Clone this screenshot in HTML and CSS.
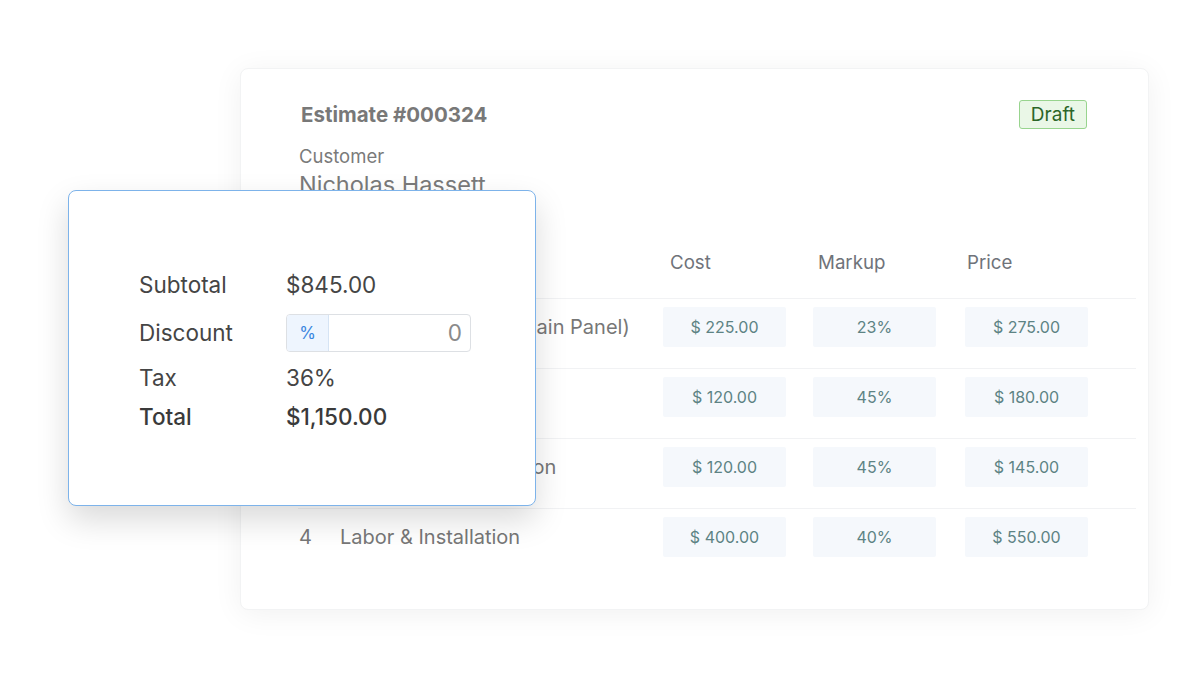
FILE: index.html
```html
<!DOCTYPE html>
<html lang="en">
<head>
    <meta charset="UTF-8">
    <title>Estimate #000324</title>
    <link rel="stylesheet" href="styles.css">
</head>
<body>
    <div class="stage">
        <div class="estimate">
            <div class="estimate-head">
                <h2>Estimate #000324</h2>
                <span class="badge">Draft</span>
            </div>
            <div class="customer">
                <span class="customer-label">Customer</span>
                <span class="customer-name">Nicholas Hassett</span>
            </div>

            <div class="items">
                <div class="row row-head">
                    <span>#</span>
                    <span>Item</span>
                    <span class="col-h">Cost</span>
                    <span class="col-h markup-h">Markup</span>
                    <span class="col-h price-h">Price</span>
                </div>
                <div class="row">
                    <span class="num">1</span>
                    <span class="name">Electrical Breaker (Main Panel)</span>
                    <span class="cell">$ 225.00</span>
                    <span class="cell">23%</span>
                    <span class="cell">$ 275.00</span>
                </div>
                <div class="row">
                    <span class="num">2</span>
                    <span class="name">Wiring &amp; Outlets</span>
                    <span class="cell">$ 120.00</span>
                    <span class="cell">45%</span>
                    <span class="cell">$ 180.00</span>
                </div>
                <div class="row">
                    <span class="num">3</span>
                    <span class="name">GFCI Outlet Installation</span>
                    <span class="cell">$ 120.00</span>
                    <span class="cell">45%</span>
                    <span class="cell">$ 145.00</span>
                </div>
                <div class="row">
                    <span class="num">4</span>
                    <span class="name">Labor &amp; Installation</span>
                    <span class="cell">$ 400.00</span>
                    <span class="cell">40%</span>
                    <span class="cell">$ 550.00</span>
                </div>
            </div>
        </div>

        <!-- totals panel floats over the estimate card -->
        <div class="totals">
            <div class="sum-row">
                <span class="sum-label">Subtotal</span>
                <span>$845.00</span>
            </div>
            <div class="sum-row discount">
                <span class="sum-label">Discount</span>
                <div class="discount-input">
                    <span class="prefix">%</span>
                    <span class="amount">0</span>
                </div>
            </div>
            <div class="sum-row tax">
                <span class="sum-label">Tax</span>
                <span>36%</span>
            </div>
            <div class="sum-row total">
                <span class="sum-label">Total</span>
                <span>$1,150.00</span>
            </div>
        </div>
    </div>
</body>
</html>
```

FILE: styles.css
```css
* {
    box-sizing: border-box;
    margin: 0;
    padding: 0;
}

body {
    font-family: Inter, "Noto Sans", sans-serif;
    background-color: #fff;
    color: #444;
    width: 1200px;
    height: 687px;
    overflow: hidden;
}

.stage {
    position: relative;
    height: 100%;
    padding: 68px 0 0 240px;
}

/* back card */
.estimate {
    width: 909px;
    height: 542px;
    background-color: #fff;
    border: 1px solid #f2f3f4;
    border-radius: 8px;
    box-shadow: 0 4px 30px rgba(0, 0, 0, 0.06);
    padding: 30px 12px 0 57px;
}

.estimate-head {
    display: flex;
    justify-content: space-between;
    align-items: center;
    height: 30px;
    margin-right: 49px;
    padding-left: 3px;
}

.estimate-head h2 {
    font-size: 20.5px;
    font-weight: 700;
    color: #787878;
}

.badge {
    font-size: 19px;
    line-height: 27px;
    padding: 0 11px;
    color: #2c6627;
    background-color: #eaf7e7;
    border: 1px solid #98d48e;
    border-radius: 3px;
}

.customer {
    display: flex;
    flex-direction: column;
    margin-top: 16px;
    padding-left: 1px;
    color: #7a7a7a;
}

.customer-label {
    font-size: 18.5px;
    line-height: 22px;
}

.customer-name {
    font-size: 23.5px;
    line-height: 28px;
    margin-top: 4px;
}

.items {
    margin-top: 22px;
}

.row {
    display: grid;
    grid-template-columns: 42px 323px 150px 152px 124px;
    align-items: center;
    border-top: 1px solid #f1f2f4;
    padding: 8px 0 21px;
    font-size: 20px;
    color: #777;
}

.row-head {
    border-top: none;
    height: 77px;
    padding: 6px 0 0;
    font-size: 18.7px;
    color: #6f737a;
}

.col-h {
    padding-left: 7px;
}

.markup-h {
    padding-left: 5px;
}

.price-h {
    padding-left: 2px;
}

.num {
    padding-left: 1px;
}

.name {
    white-space: nowrap;
}

.cell {
    width: 123px;
    height: 40px;
    display: flex;
    align-items: center;
    justify-content: center;
    font-size: 16px;
    color: #5d8384;
    background-color: #f5f8fc;
    border-radius: 2px;
}

/* totals popup */
.totals {
    position: absolute;
    left: 68px;
    top: 190px;
    width: 468px;
    height: 316px;
    background-color: #fff;
    border: 1.5px solid #7db3ea;
    border-radius: 8px;
    box-shadow: 0 14px 32px rgba(0, 0, 0, 0.15);
    padding: 80px 0 0 70px;
}

.sum-row {
    display: flex;
    align-items: center;
    font-size: 22.5px;
    line-height: 28px;
    color: #454545;
}

.sum-label {
    width: 147px;
}

.discount {
    margin-top: 15px;
}

.tax {
    margin-top: 12px;
}

.total {
    margin-top: 11px;
    font-weight: 500;
    color: #3a3a3a;
}

.discount-input {
    display: flex;
    width: 185px;
    height: 38px;
    border: 1px solid #dde0e4;
    border-radius: 4px;
    overflow: hidden;
}

.prefix {
    width: 42px;
    display: flex;
    align-items: center;
    justify-content: center;
    font-size: 17px;
    color: #3a86e0;
    background-color: #eef5fe;
    border-right: 1px solid #d6e4f4;
}

.amount {
    flex: 1;
    text-align: right;
    padding-right: 8px;
    line-height: 36px;
    color: #8a8a8a;
}
```
